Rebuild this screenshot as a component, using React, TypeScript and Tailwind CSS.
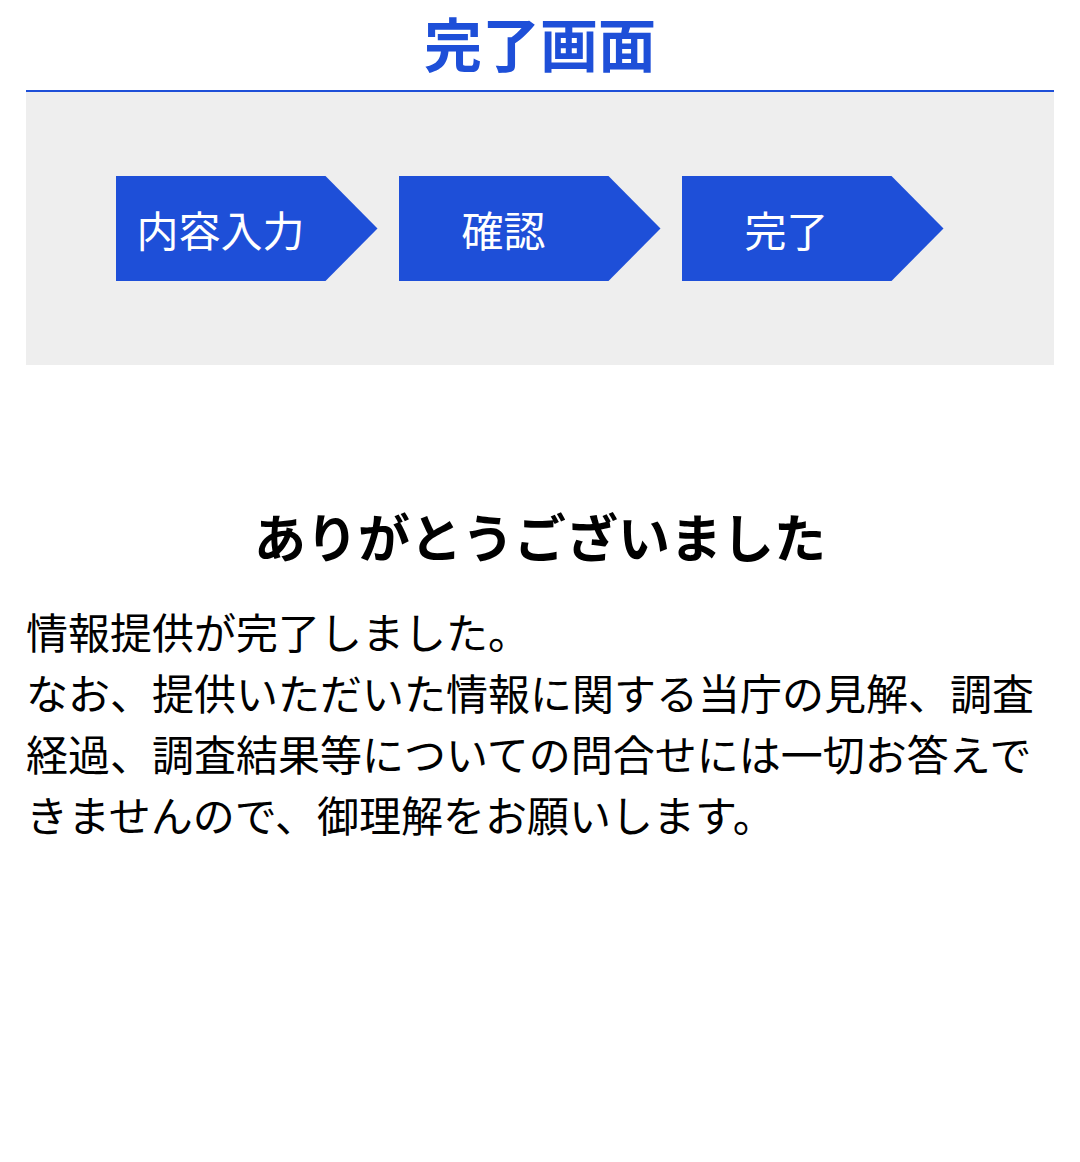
import React from "react";

const steps = ["内容入力", "確認", "完了"];

function Step({ label }: { label: string }) {
  return (
    <div className="mr-[21px] h-[105px] w-[262px] bg-[#1e4fd8] [clip-path:polygon(0_0,210px_0,100%_50%,210px_100%,0_100%)]">
      <div className="flex h-full w-[210px] items-center justify-center text-[42px] leading-none text-white">
        {label}
      </div>
    </div>
  );
}

export default function App() {
  return (
    <div
      className="min-h-[1162px] bg-white px-[26px] text-black"
      style={{ fontFamily: '"Noto Sans CJK JP", "Noto Sans", sans-serif' }}
    >
      <h1 className="border-b-2 border-[#1e4fd8] pb-[6px] text-center text-[58px] font-bold leading-[84px] text-[#1e4fd8]">
        完了画面
      </h1>

      <div className="flex h-[273px] items-center justify-center bg-[#eeeeee]">
        {steps.map((s) => (
          <Step key={s} label={s} />
        ))}
      </div>

      <div className="pt-[133px]">
        <h2 className="text-center text-[52px] font-bold leading-[76px]">
          ありがとうございました
        </h2>
        <p className="mt-[26px] text-[42px] leading-[61px]">
          情報提供が完了しました。
          <br />
          なお、提供いただいた情報に関する当庁の見解、調査経過、調査結果等についての問合せには一切お答えできませんので、御理解をお願いします。
        </p>
      </div>
    </div>
  );
}
